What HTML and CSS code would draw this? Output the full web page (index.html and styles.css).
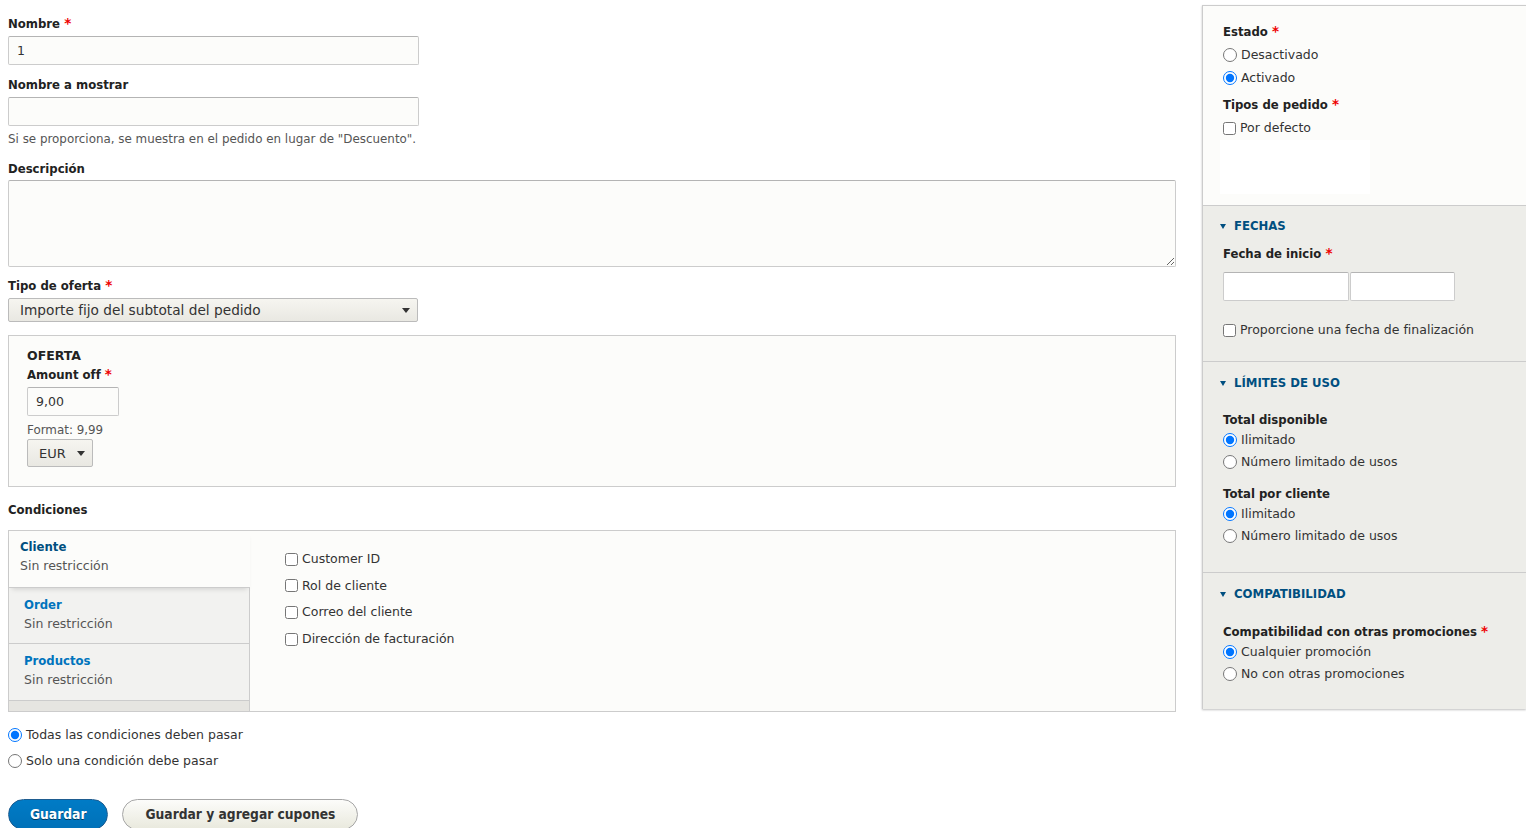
FILE: index.html
```html
<!DOCTYPE html>
<html lang="es">
<head>
    <meta charset="UTF-8">
    <title>Promoción</title>
    <link rel="stylesheet" href="styles.css">
</head>
<body>
<div class="layout">
    <div class="main">
        <div class="form-item">
            <label class="label">Nombre <span class="req">*</span></label>
            <input class="text" type="text" value="1">
        </div>
        <div class="form-item">
            <label class="label">Nombre a mostrar</label>
            <input class="text" type="text">
            <div class="description">Si se proporciona, se muestra en el pedido en lugar de "Descuento".</div>
        </div>
        <div class="form-item tight">
            <label class="label">Descripción</label>
            <textarea class="textarea"></textarea>
        </div>
        <div class="form-item">
            <label class="label">Tipo de oferta <span class="req">*</span></label>
            <div class="select-wrap wide">
                <select class="select"><option>Importe fijo del subtotal del pedido</option></select>
            </div>
        </div>

        <div class="fieldset">
            <div class="legend">OFERTA</div>
            <label class="label">Amount off <span class="req">*</span></label>
            <input class="text small" type="text" value="9,00">
            <div class="description format">Format: 9,99</div>
            <div class="select-wrap currency">
                <select class="select"><option>EUR</option></select>
            </div>
        </div>

        <div class="label conditions-title">Condiciones</div>
        <div class="vtabs">
            <ul class="vtabs-menu">
                <li class="vtab selected">
                    <strong>Cliente</strong>
                    <span>Sin restricción</span>
                </li>
                <li class="vtab">
                    <strong>Order</strong>
                    <span>Sin restricción</span>
                </li>
                <li class="vtab">
                    <strong>Productos</strong>
                    <span>Sin restricción</span>
                </li>
            </ul>
            <div class="vtabs-pane">
                <label class="option check"><input type="checkbox"> Customer ID</label>
                <label class="option check"><input type="checkbox"> Rol de cliente</label>
                <label class="option check"><input type="checkbox"> Correo del cliente</label>
                <label class="option check"><input type="checkbox"> Dirección de facturación</label>
            </div>
        </div>

        <div class="operator">
            <label class="option"><input type="radio" name="op" checked> Todas las condiciones deben pasar</label>
            <label class="option"><input type="radio" name="op"> Solo una condición debe pasar</label>
        </div>

        <div class="actions">
            <button class="button primary">Guardar</button>
            <button class="button">Guardar y agregar cupones</button>
        </div>
    </div>

    <aside class="sidebar">
        <div class="meta-header">
            <div class="label">Estado <span class="req">*</span></div>
            <div class="options spaced">
                <label class="option"><input type="radio" name="estado"> Desactivado</label>
                <label class="option"><input type="radio" name="estado" checked> Activado</label>
            </div>
            <div class="label group-gap">Tipos de pedido <span class="req">*</span></div>
            <div class="options spaced">
                <label class="option check"><input type="checkbox"> Por defecto</label>
            </div>
            <div class="blank"></div>
        </div>

        <details class="meta-section dates" open>
            <summary>FECHAS</summary>
            <div class="label">Fecha de inicio <span class="req">*</span></div>
            <div class="date-row">
                <input class="date" type="text">
                <input class="date time" type="text">
            </div>
            <label class="option check end-date"><input type="checkbox"> Proporcione una fecha de finalización</label>
        </details>

        <details class="meta-section" open>
            <summary>LÍMITES DE USO</summary>
            <div class="label first">Total disponible</div>
            <div class="options">
                <label class="option"><input type="radio" name="total" checked> Ilimitado</label>
                <label class="option"><input type="radio" name="total"> Número limitado de usos</label>
            </div>
            <div class="label group-gap">Total por cliente</div>
            <div class="options">
                <label class="option"><input type="radio" name="cliente" checked> Ilimitado</label>
                <label class="option"><input type="radio" name="cliente"> Número limitado de usos</label>
            </div>
        </details>

        <details class="meta-section" open>
            <summary>COMPATIBILIDAD</summary>
            <div class="label first">Compatibilidad con otras promociones <span class="req">*</span></div>
            <div class="options">
                <label class="option"><input type="radio" name="compat" checked> Cualquier promoción</label>
                <label class="option"><input type="radio" name="compat"> No con otras promociones</label>
            </div>
        </details>
    </aside>
</div>
</body>
</html>
```

FILE: styles.css
```css
body {
    margin: 0;
    font-family: "DejaVu Sans", Verdana, sans-serif;
    font-size: 12.5px;
    line-height: 20px;
    color: #333;
    background: #fff;
}
.layout {
    display: grid;
    grid-template-columns: 1168px 324px;
    column-gap: 26px;
    padding-left: 8px;
    align-items: start;
}
.main {
    padding-top: 13px;
}
.label {
    display: block;
    font-weight: bold;
    font-size: 11.7px;
    line-height: 20px;
    color: #222;
}
.req {
    color: #e00;
    font-size: 13.5px;
    line-height: 0;
}
.form-item {
    margin-bottom: 9px;
}
.form-item.tight {
    margin-bottom: 8px;
}
.form-item .label {
    padding-top: 1px;
    margin-bottom: 2px;
}
.form-item.tight .label {
    margin-bottom: 1px;
}
.text, .textarea, .date {
    display: block;
    box-sizing: border-box;
    font-family: inherit;
    font-size: 12.5px;
    color: #333;
    background: #fcfcfa;
    border: 1px solid #ccc;
    border-top-color: #b4b4b4;
    border-radius: 2px;
    padding: 0 8px;
    margin: 0;
}
.text {
    width: 411px;
    height: 29px;
}
.text.small {
    width: 92px;
}
.textarea {
    width: 1168px;
    height: 87px;
    resize: vertical;
}
.description {
    font-size: 11.9px;
    line-height: 19px;
    padding-top: 1px;
    color: #555;
    margin-top: 3px;
}
.select-wrap {
    position: relative;
    display: inline-block;
}
.select-wrap::after {
    content: "";
    position: absolute;
    right: 8px;
    top: 50%;
    margin-top: -2px;
    border-left: 4.5px solid transparent;
    border-right: 4.5px solid transparent;
    border-top: 5px solid #333;
    pointer-events: none;
}
.select {
    appearance: none;
    -webkit-appearance: none;
    box-sizing: border-box;
    font-family: inherit;
    color: #333;
    border: 1px solid #bbb;
    border-radius: 2px;
    background: linear-gradient(#f6f5f0, #e9e8e2);
    margin: 0;
}
.wide .select {
    width: 410px;
    height: 24px;
    font-size: 13.7px;
    padding: 0 11px;
}
.currency .select {
    width: 66px;
    height: 28px;
    font-size: 13px;
    padding: 0 11px;
}
.fieldset {
    margin-top: 13px;
    border: 1px solid #ccc;
    background: #fcfcfa;
    padding: 10px 18px 19px;
}
.legend {
    font-weight: bold;
    font-size: 12.5px;
    line-height: 18px;
    padding-top: 1px;
    margin-bottom: -1px;
    color: #222;
}
.fieldset .label {
    padding-top: 1px;
    margin-bottom: 2px;
}
.format {
    margin-top: 4px;
    padding-top: 1px;
    line-height: 18px;
}
.conditions-title {
    margin-top: 12px;
    padding-top: 1px;
    margin-bottom: 10px;
}
.vtabs {
    display: flex;
    border: 1px solid #ccc;
    background: #fcfcfa;
    height: 180px;
}
.vtabs-menu {
    list-style: none;
    margin: 0;
    padding: 0 0 10px;
    width: 240px;
    background: #e6e5e1;
    border-right: 1px solid #ccc;
    display: flex;
    flex-direction: column;
}
.vtab {
    height: 57px;
    padding: 7px 15px 0;
    box-sizing: border-box;
    background: #f2f2f0;
    border-bottom: 1px solid #ccc;
}
.vtab strong {
    display: block;
    font-size: 11.7px;
    color: #0074bd;
    line-height: 20px;
}
.vtab span {
    display: block;
    line-height: 18px;
    color: #555;
}
.vtab.selected {
    padding-top: 6px;
    background: #fcfcfa;
    padding-left: 11px;
    margin-right: -1px;
    box-shadow: 0 4px 5px -3px rgba(0, 0, 0, 0.15);
    position: relative;
}
.vtab.selected strong {
    color: #004f80;
}
.vtabs-pane {
    padding: 18px 0 0 35px;
}
.vtabs-pane .option {
    margin-bottom: 6.7px;
}
.option {
    display: flex;
    align-items: center;
    line-height: 20px;
}
.option input {
    margin: 0 4px 0 0;
    width: 14px;
    height: 14px;
}
.option.check input {
    width: 13px;
    height: 13px;
}
.operator {
    margin-top: 13px;
}
.operator .option + .option {
    margin-top: 6px;
}
.actions {
    margin-top: 28px;
    display: flex;
    gap: 14px;
}
.button {
    font-family: "DejaVu Sans Condensed", "DejaVu Sans", sans-serif;
    font-weight: bold;
    font-size: 13.7px;
    height: 31px;
    padding: 0 22px 2px;
    border-radius: 20em;
    border: 1px solid #a6a6a6;
    background: linear-gradient(#fcfcfa, #e9e9dd);
    color: #333;
    cursor: pointer;
}
.button.primary {
    padding: 0 21px 2px;
    background: linear-gradient(#007bc6, #0071b8);
    border-color: #1e5c90;
    color: #fff;
    text-shadow: 0 1px rgba(0, 0, 0, 0.5);
}

/* sidebar */
.sidebar {
    margin-top: 5px;
    border-top: 1px solid #ccc;
    border-left: 1px solid #ccc;
    background: #edede9;
    box-shadow: 0 1px 2px rgba(0, 0, 0, 0.25);
}
.meta-header {
    background: #fcfcfa;
    padding: 16px 20px 11px;
    border-bottom: 1px solid #ccc;
}
.options .option + .option {
    margin-top: 2px;
}
.options.spaced .option {
    margin-top: 3px;
}
.group-gap {
    margin-top: 7px;
}
.blank {
    width: 150px;
    height: 54px;
    margin: 2px 0 0 -3px;
    background: #fff;
}
.meta-section {
    padding: 11px 20px 26px;
    border-bottom: 1px solid #ccc;
}
.meta-section.dates {
    padding-top: 10px;
    padding-bottom: 21px;
}
.meta-section:last-child {
    border-bottom: 0;
    padding-bottom: 25px;
}
.meta-section summary {
    list-style: none;
    font-weight: bold;
    font-size: 11.7px;
    color: #004f80;
    line-height: 20px;
    margin-bottom: 8px;
    display: flex;
    align-items: center;
}
.meta-section summary::-webkit-details-marker {
    display: none;
}
.meta-section summary::before {
    content: "";
    border-left: 3px solid transparent;
    border-right: 3px solid transparent;
    border-top: 5px solid #004f80;
    margin: 0 8px 0 -3px;
}
.meta-section .label.first {
    margin-top: 17px;
}
.meta-section:last-child .label.first {
    margin-top: 18px;
}
.meta-section .group-gap {
    margin-top: 12px;
}
.date-row {
    display: flex;
    margin-top: 8px;
}
.date {
    width: 126px;
    height: 29px;
    background: #fff;
}
.date.time {
    width: 105px;
    margin-left: 1px;
}
.end-date {
    margin-top: 19px;
}
```
